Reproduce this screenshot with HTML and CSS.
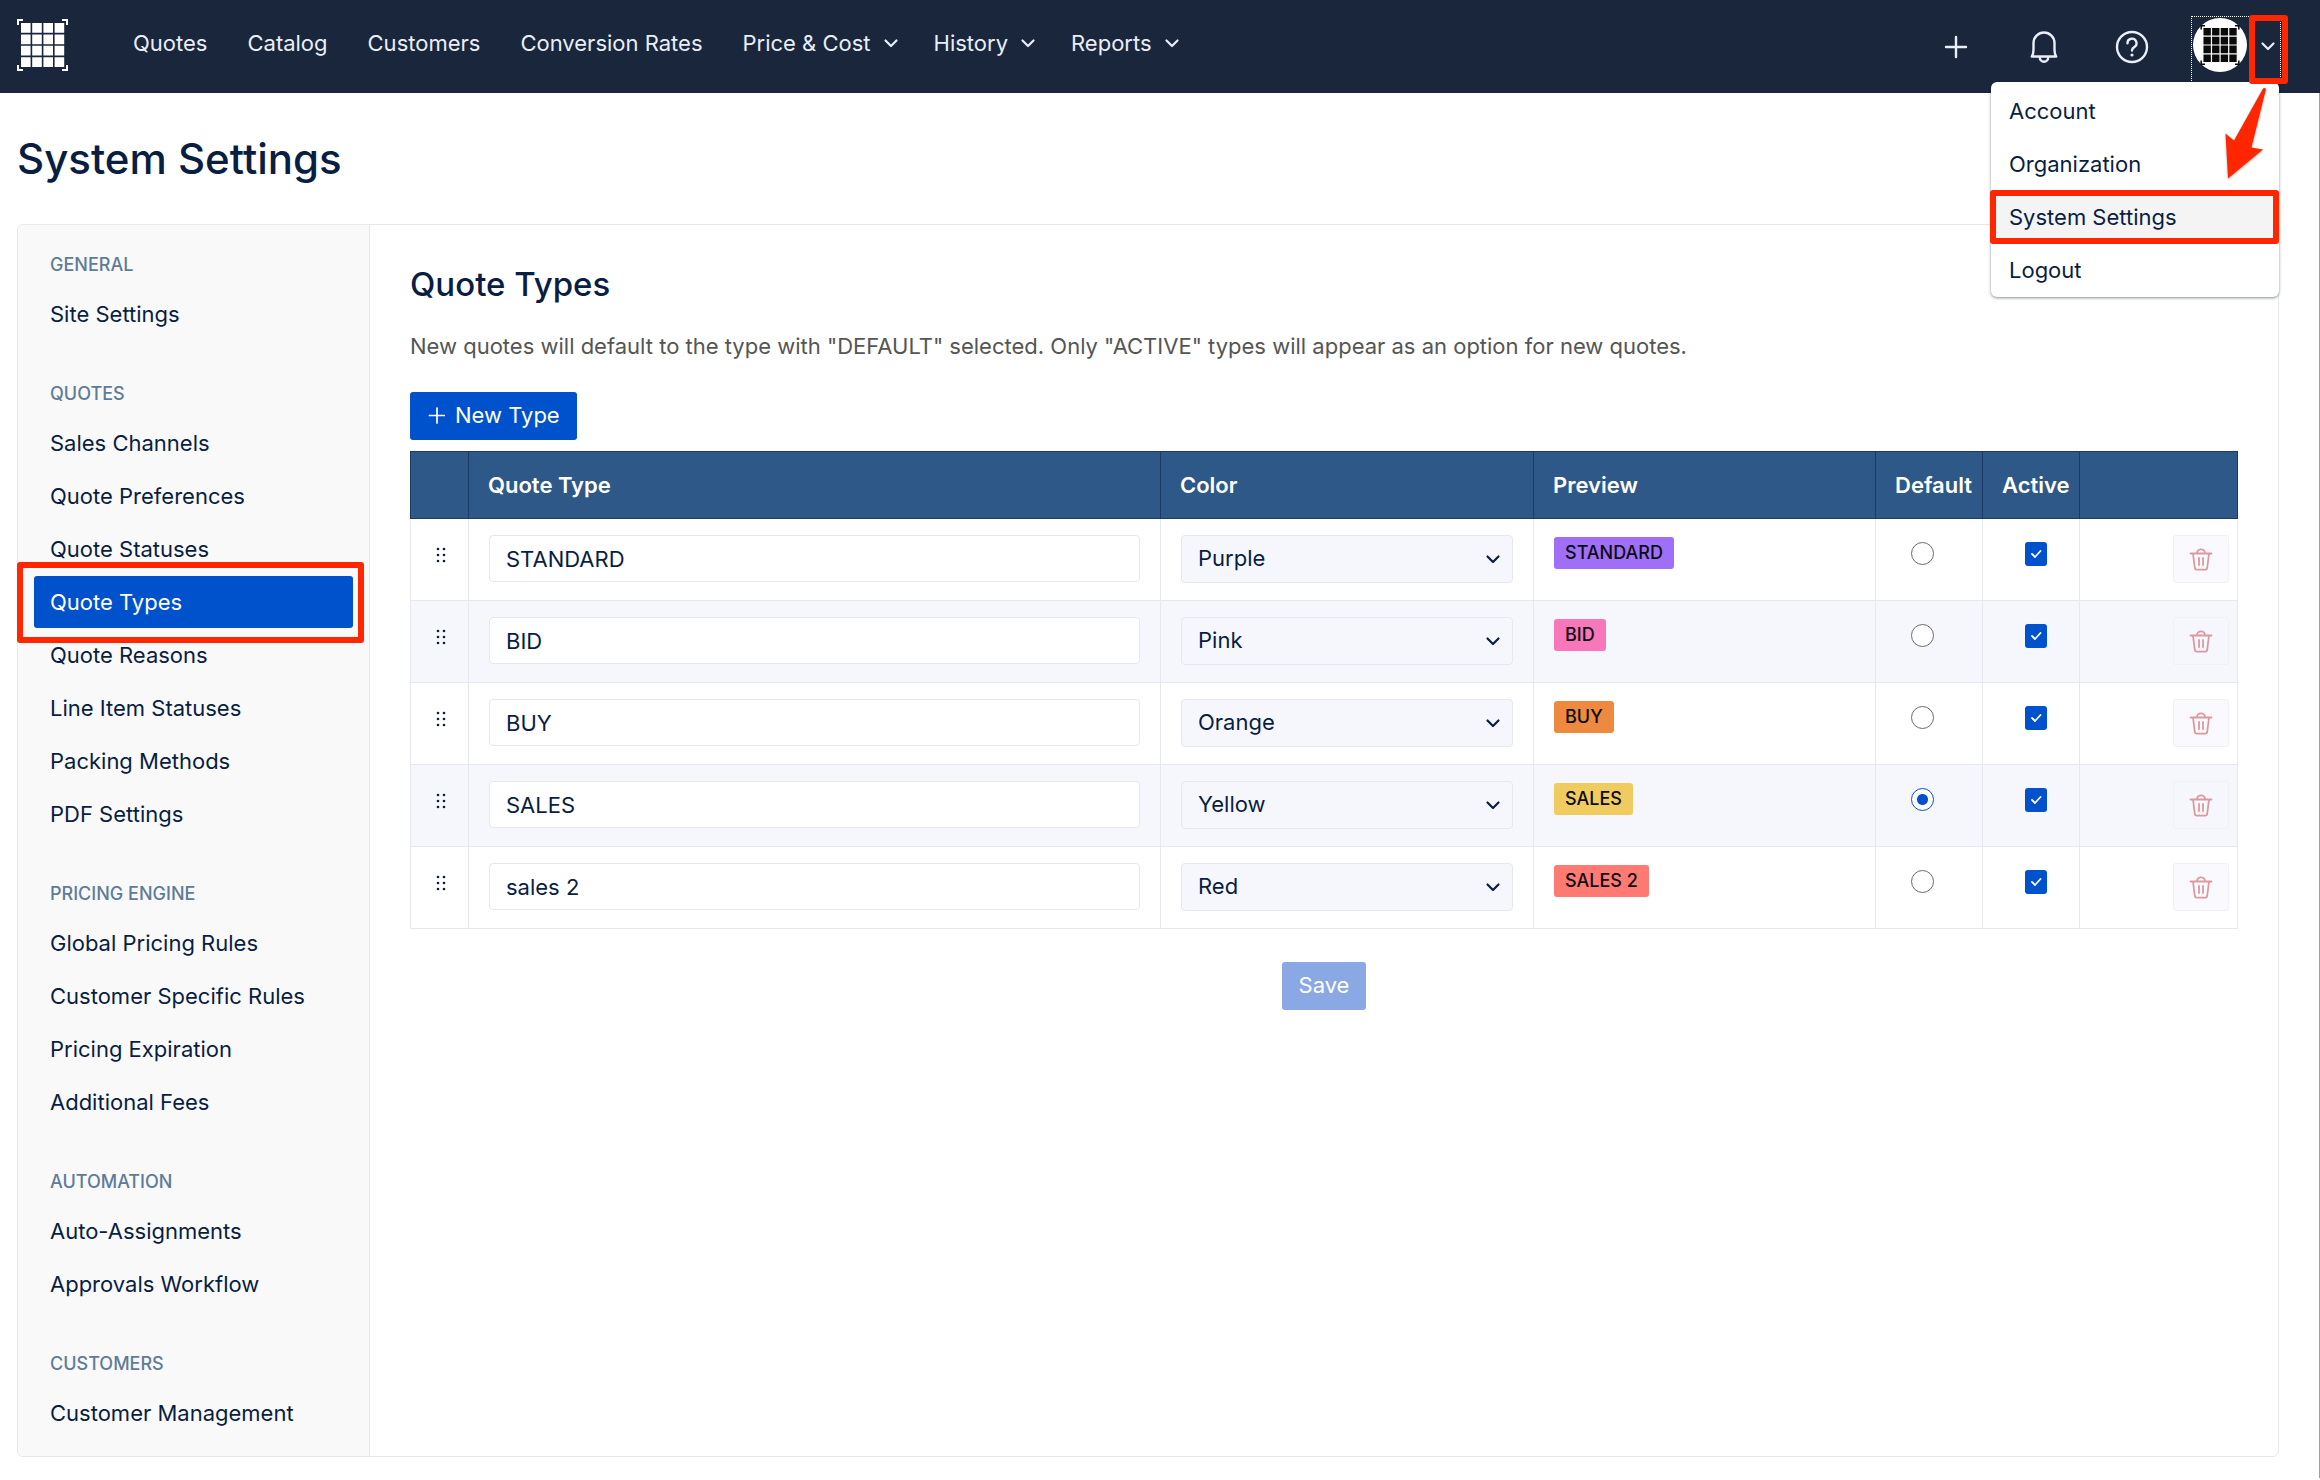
FILE: index.html
```html
<!DOCTYPE html>
<html lang="en">
<head>
<meta charset="utf-8">
<title>System Settings</title>
<link rel="stylesheet" href="styles.css">
</head>
<body>
<svg class="sprite" aria-hidden="true">
  <symbol id="chevron" viewBox="0 0 16 16"><path d="M2.500 5.500 8 11l5.500-5.500" fill="none" stroke="currentColor" stroke-width="2.200" stroke-linecap="round" stroke-linejoin="round"/></symbol>
  <symbol id="trash" viewBox="0 0 24 24"><g fill="none" stroke="currentColor" stroke-width="1.800" stroke-linecap="round" stroke-linejoin="round"><path d="M1.500 6.500h21M4 6.500l1.800 14.500a2 2 0 0 0 2 1.700h8.400a2 2 0 0 0 2-1.700L20 6.500M8 6.300a4 4 0 0 1 8 0M10 11v7M14 11v7"/></g></symbol>
  <symbol id="grip" viewBox="0 0 10 16"><g fill="currentColor"><circle cx="2" cy="2" r="1.300"/><circle cx="8" cy="2" r="1.300"/><circle cx="2" cy="8" r="1.300"/><circle cx="8" cy="8" r="1.300"/><circle cx="2" cy="14" r="1.300"/><circle cx="8" cy="14" r="1.300"/></g></symbol>
  <symbol id="grid" viewBox="0 0 51 52">
    <path d="M1 6V1h5M45 1h5v5M50 46v5h-5M6 51H1v-5" fill="none" stroke="currentColor" stroke-width="2"/>
    <path d="M4 4h9.600v9.800H4zM15.200 4h9.600v9.800h-9.600zM26.400 4H36v9.800h-9.600zM37.600 4h9.600v9.800h-9.600zM4 15.400h9.600v9.800H4zM15.200 15.400h9.600v9.800h-9.600zM26.400 15.400H36v9.800h-9.600zM37.600 15.400h9.600v9.800h-9.600zM4 26.800h9.600v9.800H4zM15.200 26.800h9.600v9.800h-9.600zM26.400 26.800H36v9.800h-9.600zM37.600 26.800h9.600v9.800h-9.600zM4 38.200h9.600V48H4zM15.200 38.200h9.600V48h-9.600zM26.400 38.200H36V48h-9.600zM37.600 38.200h9.600V48h-9.600z" fill="currentColor"/>
  </symbol>
</svg>
<header class="topbar">
  <a class="logo" href="#" aria-label="Home"><svg width="51" height="52"><use href="#grid"/></svg></a>
  <nav class="nav">
    <a href="#">Quotes</a>
    <a href="#">Catalog</a>
    <a href="#">Customers</a>
    <a href="#">Conversion Rates</a>
    <button type="button">Price &amp; Cost <svg width="16" height="16"><use href="#chevron"/></svg></button>
    <button type="button">History <svg width="16" height="16"><use href="#chevron"/></svg></button>
    <button type="button">Reports <svg width="16" height="16"><use href="#chevron"/></svg></button>
  </nav>
  <div class="tools">
    <button type="button" class="tool" aria-label="Add"><svg width="34" height="34" viewBox="0 0 34 34"><path d="M17 7v20M7 17h20" fill="none" stroke="currentColor" stroke-width="2.400" stroke-linecap="round"/></svg></button>
    <button type="button" class="tool" aria-label="Notifications"><svg width="34" height="34" viewBox="0 0 34 34"><path d="M4.800 26.500c1.600-2.200 1.700-5 1.700-8V13a10.500 10.500 0 0 1 21 0v5.500c0 3 .1 5.800 1.700 8zM12.800 27.500a4.200 4.200 0 0 0 8.400 0" fill="none" stroke="currentColor" stroke-width="2.400" stroke-linejoin="round"/></svg></button>
    <button type="button" class="tool" aria-label="Help"><svg width="34" height="34" viewBox="0 0 34 34"><g fill="none" stroke="currentColor" stroke-width="2.400" stroke-linecap="round"><circle cx="17" cy="17" r="15"/><path d="M12.500 13.200a4.500 4.500 0 1 1 6.700 3.900c-1.500.9-2.200 1.700-2.200 3.400"/></g><circle cx="17" cy="25" r="1.600" fill="currentColor"/></svg></button>
    <div class="account">
      <button type="button" class="account-toggle" aria-label="Account menu" aria-expanded="true">
        <span class="avatar"><svg width="40" height="40"><use href="#grid"/></svg></span>
        <svg class="account-chevron" width="16" height="16"><use href="#chevron"/></svg>
      </button>
      <span class="mark mark-toggle"></span>
      <div class="menu">
        <a href="#">Account</a>
        <a href="#">Organization</a>
        <a href="#" class="current">System Settings<span class="mark mark-menu"></span></a>
        <a href="#">Logout</a>
        <svg class="arrow" width="40" height="92" viewBox="0 0 40 92"><path d="M41 1 26.500 59.500 38 61.500 3 90.500.5 45.500 9 52.500 37.500 1.500Q39-1 41 1z" fill="#ff2600"/></svg>
      </div>
    </div>
  </div>
</header>
<div class="page">
  <h1>System Settings</h1>
  <div class="card">
    <nav class="sidebar" aria-label="Settings">
      <section>
        <h3>GENERAL</h3>
        <a href="#">Site Settings</a>
      </section>
      <section>
        <h3>QUOTES</h3>
        <a href="#">Sales Channels</a>
        <a href="#">Quote Preferences</a>
        <a href="#">Quote Statuses</a>
        <a href="#" class="active">Quote Types<span class="mark mark-side"></span></a>
        <a href="#">Quote Reasons</a>
        <a href="#">Line Item Statuses</a>
        <a href="#">Packing Methods</a>
        <a href="#">PDF Settings</a>
      </section>
      <section>
        <h3>PRICING ENGINE</h3>
        <a href="#">Global Pricing Rules</a>
        <a href="#">Customer Specific Rules</a>
        <a href="#">Pricing Expiration</a>
        <a href="#">Additional Fees</a>
      </section>
      <section>
        <h3>AUTOMATION</h3>
        <a href="#">Auto-Assignments</a>
        <a href="#">Approvals Workflow</a>
      </section>
      <section>
        <h3>CUSTOMERS</h3>
        <a href="#">Customer Management</a>
      </section>
    </nav>
    <main class="content">
      <h2>Quote Types</h2>
      <p>New quotes will default to the type with "DEFAULT" selected. Only "ACTIVE" types will appear as an option for new quotes.</p>
      <button type="button" class="btn"><svg width="18" height="18" viewBox="0 0 18 18"><path d="M10 2v15M2.500 9.500h15" fill="none" stroke="currentColor" stroke-width="1.700" stroke-linecap="round"/></svg>New Type</button>
      <table>
        <colgroup><col class="c-grip"><col class="c-type"><col class="c-color"><col class="c-preview"><col class="c-default"><col class="c-active"><col class="c-action"></colgroup>
        <thead>
          <tr><th></th><th>Quote Type</th><th>Color</th><th>Preview</th><th>Default</th><th>Active</th><th></th></tr>
        </thead>
        <tbody>
          <tr>
            <td class="grip"><svg width="10" height="16"><use href="#grip"/></svg></td>
            <td><input type="text" class="field" aria-label="Quote type 1" value="STANDARD"></td>
            <td><div class="select"><select aria-label="Color 1"><option>Purple</option></select><svg width="16" height="16"><use href="#chevron"/></svg></div></td>
            <td><span class="badge purple">STANDARD</span></td>
            <td class="pick"><input type="radio" name="default" aria-label="Default 1"></td>
            <td class="pick"><input type="checkbox" aria-label="Active 1" checked></td>
            <td class="action"><button type="button" class="delete" aria-label="Delete 1"><svg width="24" height="24"><use href="#trash"/></svg></button></td>
          </tr>
          <tr>
            <td class="grip"><svg width="10" height="16"><use href="#grip"/></svg></td>
            <td><input type="text" class="field" aria-label="Quote type 2" value="BID"></td>
            <td><div class="select"><select aria-label="Color 2"><option>Pink</option></select><svg width="16" height="16"><use href="#chevron"/></svg></div></td>
            <td><span class="badge pink">BID</span></td>
            <td class="pick"><input type="radio" name="default" aria-label="Default 2"></td>
            <td class="pick"><input type="checkbox" aria-label="Active 2" checked></td>
            <td class="action"><button type="button" class="delete" aria-label="Delete 2"><svg width="24" height="24"><use href="#trash"/></svg></button></td>
          </tr>
          <tr>
            <td class="grip"><svg width="10" height="16"><use href="#grip"/></svg></td>
            <td><input type="text" class="field" aria-label="Quote type 3" value="BUY"></td>
            <td><div class="select"><select aria-label="Color 3"><option>Orange</option></select><svg width="16" height="16"><use href="#chevron"/></svg></div></td>
            <td><span class="badge orange">BUY</span></td>
            <td class="pick"><input type="radio" name="default" aria-label="Default 3"></td>
            <td class="pick"><input type="checkbox" aria-label="Active 3" checked></td>
            <td class="action"><button type="button" class="delete" aria-label="Delete 3"><svg width="24" height="24"><use href="#trash"/></svg></button></td>
          </tr>
          <tr>
            <td class="grip"><svg width="10" height="16"><use href="#grip"/></svg></td>
            <td><input type="text" class="field" aria-label="Quote type 4" value="SALES"></td>
            <td><div class="select"><select aria-label="Color 4"><option>Yellow</option></select><svg width="16" height="16"><use href="#chevron"/></svg></div></td>
            <td><span class="badge yellow">SALES</span></td>
            <td class="pick"><input type="radio" name="default" aria-label="Default 4" checked></td>
            <td class="pick"><input type="checkbox" aria-label="Active 4" checked></td>
            <td class="action"><button type="button" class="delete" aria-label="Delete 4"><svg width="24" height="24"><use href="#trash"/></svg></button></td>
          </tr>
          <tr>
            <td class="grip"><svg width="10" height="16"><use href="#grip"/></svg></td>
            <td><input type="text" class="field" aria-label="Quote type 5" value="sales 2"></td>
            <td><div class="select"><select aria-label="Color 5"><option>Red</option></select><svg width="16" height="16"><use href="#chevron"/></svg></div></td>
            <td><span class="badge red">SALES 2</span></td>
            <td class="pick"><input type="radio" name="default" aria-label="Default 5"></td>
            <td class="pick"><input type="checkbox" aria-label="Active 5" checked></td>
            <td class="action"><button type="button" class="delete" aria-label="Delete 5"><svg width="24" height="24"><use href="#trash"/></svg></button></td>
          </tr>
        </tbody>
      </table>
      <button type="button" class="btn save" disabled>Save</button>
    </main>
  </div>
</div>
</body>
</html>
```
FILE: styles.css
```css
* {
  box-sizing: border-box;
}

body {
  margin: 0;
  background: #fff;
  color: #091e42;
  font: 22px/28px Inter, "Liberation Sans", sans-serif;
}

a {
  color: inherit;
  text-decoration: none;
}

button,
input,
select {
  margin: 0;
  font: inherit;
  color: inherit;
}

button {
  padding: 0;
  border: 0;
  background: none;
}

svg {
  display: block;
  flex: none;
}

h1,
h2,
h3,
p {
  margin: 0;
}

.sprite {
  position: absolute;
  width: 0;
  height: 0;
}

/* Top bar */
.topbar {
  display: flex;
  align-items: center;
  height: 93px;
  padding: 0 40px 0 17px;
  background: #19263c;
  color: #e9eef8;
}

.logo {
  margin: 0 65px 3px 0;
  color: #fff;
}

.nav {
  display: flex;
  gap: 40px;
  margin-bottom: 8px;
}

.nav button {
  display: flex;
  align-items: center;
  gap: 12px;
}

.nav button + button {
  margin-left: -5px;
}

.tools {
  display: flex;
  align-items: center;
  gap: 54px;
  margin-left: auto;
}

.account {
  position: relative;
  margin: 6px 0 0 -11px;
}

.account-toggle {
  display: flex;
  align-items: flex-start;
  gap: 13px;
  width: 88px;
  height: 65px;
  padding: 1px 0 0 1px;
  outline: 1px dotted #fff;
}

.avatar {
  display: flex;
  align-items: center;
  justify-content: center;
  width: 54px;
  height: 54px;
  border-radius: 50%;
  background: #fff;
  color: #0b0b0b;
}

.account-chevron {
  margin-top: 20px;
}

.menu {
  position: absolute;
  top: 65px;
  right: 1px;
  z-index: 2;
  width: 288px;
  padding-top: 3px;
  border-radius: 6px;
  background: #fff;
  box-shadow: 0 1px 3px rgba(9, 30, 66, 0.5);
  color: #091e42;
}

.menu a {
  position: relative;
  display: block;
  padding: 12px 18px 13px;
}

.menu .current {
  background: #f4f4f5;
}

/* Red call-outs */
.mark {
  position: absolute;
  z-index: 3;
  border: 6px solid #ff2600;
  border-radius: 3px;
  pointer-events: none;
}

.mark-toggle {
  top: -2px;
  right: -8px;
  width: 39px;
  height: 69px;
}

.mark-menu {
  inset: -1px 0 0 -1px;
}

.mark-side {
  inset: -14px -11px -15px -17px;
}

.arrow {
  position: absolute;
  top: 6px;
  right: 14px;
  overflow: visible;
  filter: drop-shadow(0 1px 1px rgba(0, 0, 0, 0.3));
}

/* Page */
.page {
  padding: 36px 40px 21px 17px;
  border-right: 1px solid #a0a0a0;
}

h1 {
  margin-bottom: 35px;
  font-size: 42px;
  font-weight: 500;
  line-height: 60px;
}

.card {
  display: flex;
  border: 1px solid #e6e8ef;
  border-radius: 6px;
}

.sidebar {
  display: flex;
  flex: none;
  flex-direction: column;
  gap: 42px;
  width: 352px;
  padding: 28px 16px 17px;
  border-right: 1px solid #e6e8ef;
  border-radius: 6px 0 0 6px;
  background: #f9f9f9;
}

.sidebar section {
  display: flex;
  flex-direction: column;
  gap: 1px;
}

.sidebar h3 {
  margin-bottom: 10px;
  padding-left: 16px;
  color: #5e7c99;
  font-size: 18px;
  font-weight: 500;
  line-height: 24px;
}

.sidebar a {
  position: relative;
  padding: 12px 16px;
  border-radius: 3px;
}

.sidebar .active {
  background: #0052cc;
  color: #fff;
}

.content {
  display: flex;
  flex: 1;
  flex-direction: column;
  align-items: flex-start;
  min-width: 0;
  padding: 38px 40px;
}

h2 {
  font-size: 33px;
  font-weight: 500;
  line-height: 42px;
}

.content p {
  margin: 27px 0 32px;
  color: #555;
}

.btn {
  display: flex;
  align-items: center;
  gap: 10px;
  height: 48px;
  padding: 0 17px 2px;
  border-radius: 3px;
  background: #0052cc;
  color: #fff;
}

.save {
  align-self: center;
  margin-top: 33px;
  background: #8aa8e4;
}

table {
  width: 100%;
  margin-top: 11px;
  border-collapse: collapse;
  table-layout: fixed;
}

.c-grip { width: 58px; }
.c-color { width: 373px; }
.c-preview { width: 342px; }
.c-default { width: 107px; }
.c-active { width: 97px; }
.c-action { width: 158px; }

th {
  height: 67px;
  padding: 0 0 0 19px;
  border: 1px solid #1e3a63;
  background: #2d5887;
  color: #fff;
  font-weight: 600;
  text-align: left;
}

td {
  height: 82px;
  padding: 16px 20px;
  border: 1px solid #e6e8ef;
  vertical-align: top;
}

tbody tr:nth-child(even) {
  background: #f6f7fc;
}

.grip svg {
  margin: 12px 0 0 5px;
}

.field,
.select select {
  display: block;
  width: 100%;
  height: 47px;
  padding: 0 16px;
  border: 1px solid #e6e8ef;
  border-radius: 4px;
  background: #fff;
}

.select {
  display: grid;
  align-items: center;
}

.select select {
  grid-area: 1 / 1;
  height: 48px;
  padding-bottom: 2px;
  background: #f6f7fc;
  appearance: none;
}

.select svg {
  grid-area: 1 / 1;
  justify-self: end;
  margin-right: 12px;
  pointer-events: none;
}

.badge {
  display: block;
  width: fit-content;
  margin-top: 2px;
  padding: 4px 11px;
  border-radius: 3px;
  color: #0b0b12;
  font-size: 18px;
  font-weight: 500;
  line-height: 24px;
}

.purple { background: #a06ff7; }
.pink { background: #f777ba; }
.orange { background: #ee8a40; }
.yellow { background: #f0cc60; }
.red { background: #fe7a72; }

.pick input {
  display: block;
  margin: 7px auto 0;
  appearance: none;
}

.pick input[type="radio"] {
  width: 23px;
  height: 23px;
  margin-left: 15px;
  border: 1px solid #6b6b6b;
  border-radius: 50%;
  background: #fff;
}

.pick input[type="radio"]:checked {
  border-color: #0052cc;
  background: radial-gradient(circle, #0052cc 5px, #fff 6px);
}

.pick input[type="checkbox"] {
  width: 22px;
  height: 24px;
  margin-left: 22px;
  border-radius: 3px;
  background: #0052cc url("data:image/svg+xml,%3Csvg xmlns='http://www.w3.org/2000/svg' viewBox='0 0 22 24'%3E%3Cpath d='M7 12l3 3 5.500-6' fill='none' stroke='%23fff' stroke-width='1.800' stroke-linecap='round' stroke-linejoin='round'/%3E%3C/svg%3E");
}

.action {
  padding-right: 8px;
}

.delete {
  display: flex;
  align-items: center;
  justify-content: center;
  width: 56px;
  height: 48px;
  margin-left: auto;
  border: 1px solid #f0f1f7;
  border-radius: 3px;
  background: #fafafe;
  color: #d99a9f;
}

tr:nth-child(even) .delete {
  background: #f6f7fc;
}
```
